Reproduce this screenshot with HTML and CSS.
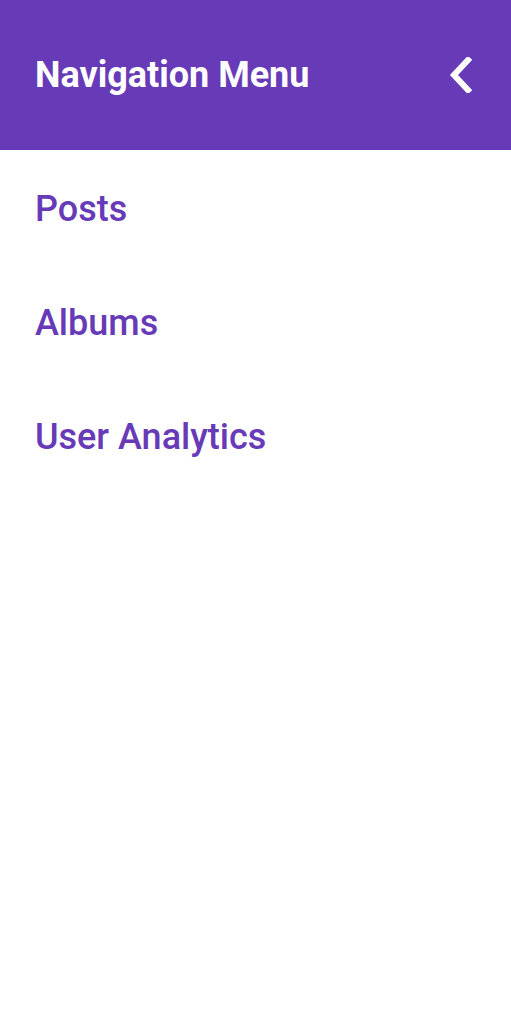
FILE: index.html
```html
<!DOCTYPE html>
<html>
<head>
<meta charset="utf-8">
<link rel="stylesheet" href="styles.css">
</head>
<body>
<div class="drawer">
  <header class="header">
    <h1 class="title">Navigation Menu</h1>
    <button class="back" aria-label="Close">
      <svg width="24" height="36" viewBox="0 0 24 36"><path d="M19 3 L5 18 L19 33" fill="none" stroke="#fff" stroke-width="6" stroke-linecap="square" stroke-linejoin="miter"/></svg>
    </button>
  </header>
  <nav class="menu">
    <a class="item" href="#">Posts</a>
    <a class="item" href="#">Albums</a>
    <a class="item" href="#">User Analytics</a>
  </nav>
</div>
</body>
</html>
```
FILE: styles.css
```css
html, body {
  margin: 0;
  padding: 0;
  background: #fff;
  font-family: Roboto, "Liberation Sans", sans-serif;
}
.drawer {
  width: 511px;
}
.header {
  height: 150px;
  background: #673ab7;
  display: flex;
  align-items: center;
  justify-content: space-between;
  padding: 0 38px 0 35px;
  box-sizing: border-box;
}
.title {
  margin: 0;
  color: #fff;
  font-size: 36px;
  font-weight: 700;
}
.back {
  background: none;
  border: 0;
  padding: 0;
  display: flex;
}
.menu {
  display: flex;
  flex-direction: column;
  padding-top: 2px;
}
.item {
  height: 114px;
  display: flex;
  align-items: center;
  padding-left: 35px;
  color: #673ab7;
  text-decoration: none;
  font-size: 36px;
  font-weight: 500;
}
```
